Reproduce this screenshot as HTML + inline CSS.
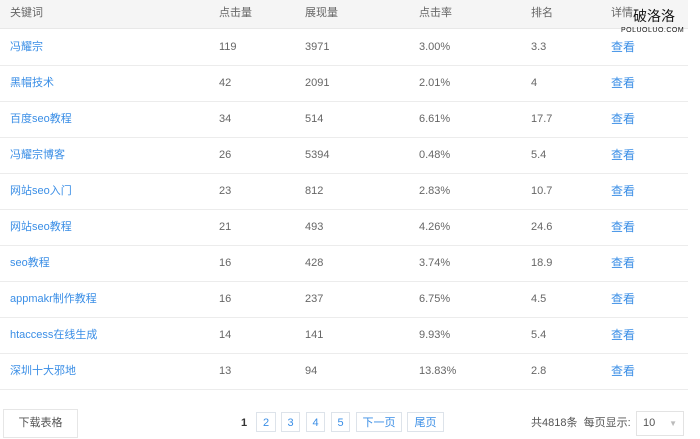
<!DOCTYPE html>
<html><head><meta charset="utf-8"><style>
body{margin:0;width:700px;height:439px;background:#fff;font-family:"Liberation Sans","Noto Sans CJK SC",sans-serif;font-size:11px;color:#666;position:relative;overflow:hidden}
.hdr{position:absolute;left:0;top:0;width:688px;height:28px;background:#f5f5f5;border-bottom:1px solid #e8e8e8}
.row{position:absolute;left:0;width:688px;height:36px;border-bottom:1px solid #ececec}
.c{position:absolute;line-height:14px}
a{color:#3a8ee6;text-decoration:none}
.box{position:absolute;top:412px;height:20px;border:1px solid #dde3ea;color:#3a8ee6;text-align:center;line-height:20px;font-size:11px;box-sizing:border-box}
</style></head><body>
<div class="hdr"></div>
<div class="c" style="left:10px;top:6px">关键词</div>
<div class="c" style="left:219px;top:6px">点击量</div>
<div class="c" style="left:305px;top:6px">展现量</div>
<div class="c" style="left:419px;top:6px">点击率</div>
<div class="c" style="left:531px;top:6px">排名</div>
<div class="c" style="left:611px;top:6px">详情</div>
<div class="c" style="left:633px;top:8px;font-size:14px;color:#111;line-height:16px;background:#f5f5f5">破洛洛</div>
<div class="c" style="left:621px;top:27px;font-size:7px;color:#111;letter-spacing:0.5px;line-height:8px">POLUOLUO.COM</div>
<div id="rows"></div>
<script>
var d=[["冯耀宗",119,3971,"3.00%","3.3"],["黑帽技术",42,2091,"2.01%","4"],["百度seo教程",34,514,"6.61%","17.7"],["冯耀宗博客",26,5394,"0.48%","5.4"],["网站seo入门",23,812,"2.83%","10.7"],["网站seo教程",21,493,"4.26%","24.6"],["seo教程",16,428,"3.74%","18.9"],["appmakr制作教程",16,237,"6.75%","4.5"],["htaccess在线生成",14,141,"9.93%","5.4"],["深圳十大邪地",13,94,"13.83%","2.8"]];
var h="";d.forEach(function(r,i){var t=29+36*i,y=t+11;
h+='<div class="row" style="top:'+t+'px"></div>';
h+='<div class="c" style="left:10px;top:'+y+'px"><a>'+r[0]+'</a></div>';
h+='<div class="c" style="left:219px;top:'+y+'px">'+r[1]+'</div>';
h+='<div class="c" style="left:305px;top:'+y+'px">'+r[2]+'</div>';
h+='<div class="c" style="left:419px;top:'+y+'px">'+r[3]+'</div>';
h+='<div class="c" style="left:531px;top:'+y+'px">'+r[4]+'</div>';
h+='<div class="c" style="left:611px;top:'+y+'px;font-size:12px"><a>查看</a></div>';});
document.getElementById("rows").innerHTML=h;
</script>
<div class="box" style="left:3px;top:409px;width:75px;height:29px;line-height:27px;color:#555;border-color:#e6e6e6">下载表格</div>
<div class="c" style="left:241px;top:416px;color:#333;font-weight:bold">1</div>
<div class="box" style="left:256px;width:20px">2</div>
<div class="box" style="left:281px;width:19px">3</div>
<div class="box" style="left:306px;width:19px">4</div>
<div class="box" style="left:331px;width:19px">5</div>
<div class="box" style="left:356px;width:46px">下一页</div>
<div class="box" style="left:407px;width:37px">尾页</div>
<div class="c" style="left:531px;top:416px;color:#555">共4818条&nbsp; 每页显示:</div>
<div class="box" style="left:636px;top:411px;width:48px;height:25px;line-height:23px;color:#555;text-align:left;padding-left:6px;border-color:#e3e3e3">10<span style="position:absolute;right:6px;color:#bbb;font-size:8px">▼</span></div>
</body></html>
